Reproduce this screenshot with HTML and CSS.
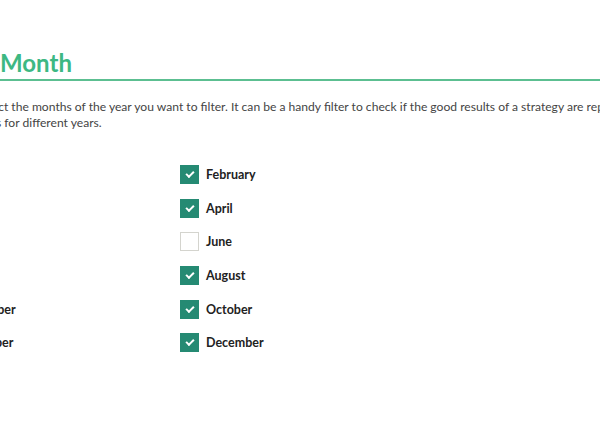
FILE: index.html
```html
<!DOCTYPE html>
<html lang="en">
<head>
  <meta charset="UTF-8" />
  <title>Filter by Month</title>
  <link rel="stylesheet" href="styles.css">
</head>
<body>

<div class="panel">
  <h2 class="panelTitle">Month</h2>
  <p class="intro">Select the months of the year you want to filter. It can be a handy filter to check if the good results of a strategy are repeated<br>ones for different years.</p>

  <div class="months">
    <label class="month"><span class="box checked"></span>January</label>
    <label class="month"><span class="box checked"></span>February</label>
    <label class="month"><span class="box checked"></span>March</label>
    <label class="month"><span class="box checked"></span>April</label>
    <label class="month"><span class="box checked"></span>May</label>
    <label class="month"><span class="box"></span>June</label>
    <label class="month"><span class="box checked"></span>July</label>
    <label class="month"><span class="box checked"></span>August</label>
    <label class="month"><span class="box checked"></span>September</label>
    <label class="month"><span class="box checked"></span>October</label>
    <label class="month"><span class="box checked"></span>November</label>
    <label class="month"><span class="box checked"></span>December</label>
  </div>
</div>

</body>
</html>
```

FILE: styles.css
```css
body {
  background: #fff;
  color: #222;
  margin: 0;
  padding: 0;
  font-family: Lato, "Open Sans", sans-serif;
  overflow: hidden;
}

.panel {
  margin: 0 0 0 -24px;
  width: 700px;
}

.panelTitle {
  margin: 48px 0 0 0;
  padding: 0 0 2px 24px;
  font-size: 24px;
  line-height: 29px;
  font-weight: 700;
  color: #3db883;
  border-bottom: 2px solid #5cbf91;
}

.intro {
  margin: 18px 0 0 0;
  width: 760px;
  font-size: 12.1px;
  line-height: 16px;
  color: #444;
}

.months {
  display: grid;
  grid-template-columns: 251px 251px;
  row-gap: 14.7px;
  margin: 34px 0 0 -47px;
}

.month {
  display: flex;
  align-items: center;
  gap: 7px;
  font-size: 12.5px;
  font-weight: 700;
  color: #222;
  height: 19px;
}

.box {
  width: 17px;
  height: 17px;
  border: 1px solid #d4d4ce;
  background: #fff;
  display: flex;
  align-items: center;
  justify-content: center;
}

.box.checked {
  background: #258a73;
  border-color: #258a73;
}

.box.checked::after {
  content: "";
  width: 6px;
  height: 3px;
  margin-top: -2px;
  border-left: 2px solid #fff;
  border-bottom: 2px solid #fff;
  transform: rotate(-45deg);
}
```
